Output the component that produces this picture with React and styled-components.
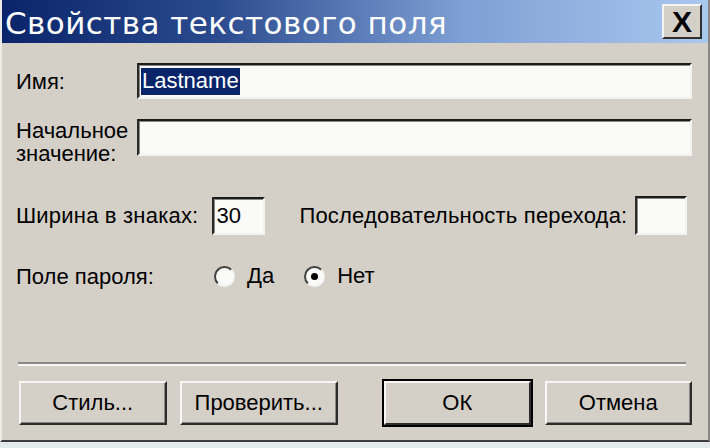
import React from 'react';
import styled, { createGlobalStyle } from 'styled-components';

const GlobalStyle = createGlobalStyle`
  html, body {
    margin: 0;
    padding: 0;
    background: #e4eaec;
  }
  body {
    font-family: "Liberation Sans", Arial, sans-serif;
  }
`;

const Dialog = styled.div`
  width: 706px;
  height: 440px;
  display: flex;
  flex-direction: column;
  background: #d4d0c8;
  border-left: 2px solid #ecebe6;
  border-right: 2px solid #8a8884;
  border-bottom: 2px solid #3c3c3c;
`;

const TitleBar = styled.div`
  height: 43px;
  display: flex;
  align-items: center;
  justify-content: space-between;
  padding: 0 6px 0 3px;
  background: linear-gradient(to right, #0a246a 0%, #2a4a8e 30%, #7e9fd4 65%, #a8c8ee 100%);
`;

const Title = styled.div`
  color: #fff;
  font-family: "DejaVu Sans", "Liberation Sans", sans-serif;
  font-size: 31px;
  letter-spacing: 0.45px;
  padding-top: 2px;
`;

const CloseButton = styled.div`
  box-sizing: border-box;
  width: 40px;
  height: 35px;
  display: flex;
  align-items: center;
  justify-content: center;
  background: #d4d0c8;
  border: 2px solid;
  border-color: #f4f4f4 #303030 #303030 #f4f4f4;
  font-size: 30px;
  font-weight: bold;
  color: #000;
`;

const Body = styled.div`
  flex: 1;
  display: flex;
  flex-direction: column;
  padding: 20px 16px 0 14px;
`;

const Row = styled.div`
  display: flex;
  align-items: ${p => p.$align || 'center'};
  margin-bottom: ${p => p.$gap || 0}px;
`;

const Label = styled.div`
  width: ${p => p.$w || 121}px;
  flex-shrink: 0;
  font-size: 22px;
  line-height: 23px;
  color: #000;
`;

const TextLabel = styled.div`
  font-size: 22px;
  letter-spacing: 0.2px;
  color: #000;
  margin: 0 ${p => p.$mr || 0}px 0 ${p => p.$ml || 0}px;
`;

const Field = styled.div`
  box-sizing: border-box;
  width: ${p => (p.$w ? `${p.$w}px` : 'auto')};
  flex: ${p => (p.$w ? '0 0 auto' : 1)};
  height: ${p => p.$h || 37}px;
  background: #fafaf8;
  border: 2px solid;
  border-color: #1c1c1c #f2f2f0 #f2f2f0 #2a2a2a;
  box-shadow: inset 1px 1px 0 #8a8884;
  display: flex;
  align-items: center;
  padding-left: 2px;
  font-size: 22px;
`;

const Selected = styled.span`
  background: #0a246a;
  color: #fff;
  padding: 0 1px 1px 1px;
`;

const Radio = styled.span`
  box-sizing: border-box;
  width: 21px;
  height: 21px;
  border-radius: 50%;
  background: #fafaf8;
  border: 2px solid;
  border-color: #404040 #f4f4f4 #f4f4f4 #404040;
  display: inline-flex;
  align-items: center;
  justify-content: center;
  margin-right: 12px;
  &::after {
    content: '';
    width: 7px;
    height: 7px;
    border-radius: 50%;
    background: ${p => (p.$checked ? '#000' : 'transparent')};
  }
`;

const Option = styled.div`
  display: flex;
  align-items: center;
  font-size: 22px;
  margin-right: ${p => p.$mr || 0}px;
`;

const Separator = styled.div`
  margin: auto 6px 15px 2px;
  height: 2px;
  background: #8a8884;
  border-bottom: 2px solid #f6f6f4;
`;

const Buttons = styled.div`
  display: flex;
  align-items: center;
  padding-bottom: 15px;
`;

const Button = styled.div`
  box-sizing: border-box;
  width: ${p => p.$w}px;
  height: 44px;
  margin-left: ${p => p.$ml || 0}px;
  display: flex;
  align-items: center;
  justify-content: center;
  font-size: 22px;
  color: #000;
  background: #d4d0c8;
  border: 2px solid;
  border-color: #f6f6f4 #2c2c2c #2c2c2c #f6f6f4;
  box-shadow: ${p => (p.$default ? '0 0 0 2px #000' : 'inset -1px -1px 0 #8a8884')};
`;

export default function App() {
  return (
    <>
      <GlobalStyle />
      <Dialog>
        <TitleBar>
          <Title>Свойства текстового поля</Title>
          <CloseButton>X</CloseButton>
        </TitleBar>
        <Body>
          <Row $gap={20}>
            <Label>Имя:</Label>
            <Field $h={36}><Selected>Lastname</Selected></Field>
          </Row>
          <Row $gap={31} $align="flex-start">
            <Label>Начальное значение:</Label>
            <Field />
          </Row>
          <Row $gap={28}>
            <TextLabel $mr={14}>Ширина в знаках:</TextLabel>
            <Field $w={53} $h={38}>30</Field>
            <TextLabel $ml={34} $mr={8}>Последовательность перехода:</TextLabel>
            <Field $w={52} $h={39} />
          </Row>
          <Row>
            <Label $w={198}>Поле пароля:</Label>
            <Option $mr={30}><Radio />Да</Option>
            <Option><Radio $checked />Нет</Option>
          </Row>
          <Separator />
          <Buttons>
            <Button $w={148} $ml={3}>Стиль...</Button>
            <Button $w={159} $ml={13}>Проверить...</Button>
            <Button $w={147} $ml={46} $default>ОК</Button>
            <Button $w={148} $ml={14}>Отмена</Button>
          </Buttons>
        </Body>
      </Dialog>
    </>
  );
}
